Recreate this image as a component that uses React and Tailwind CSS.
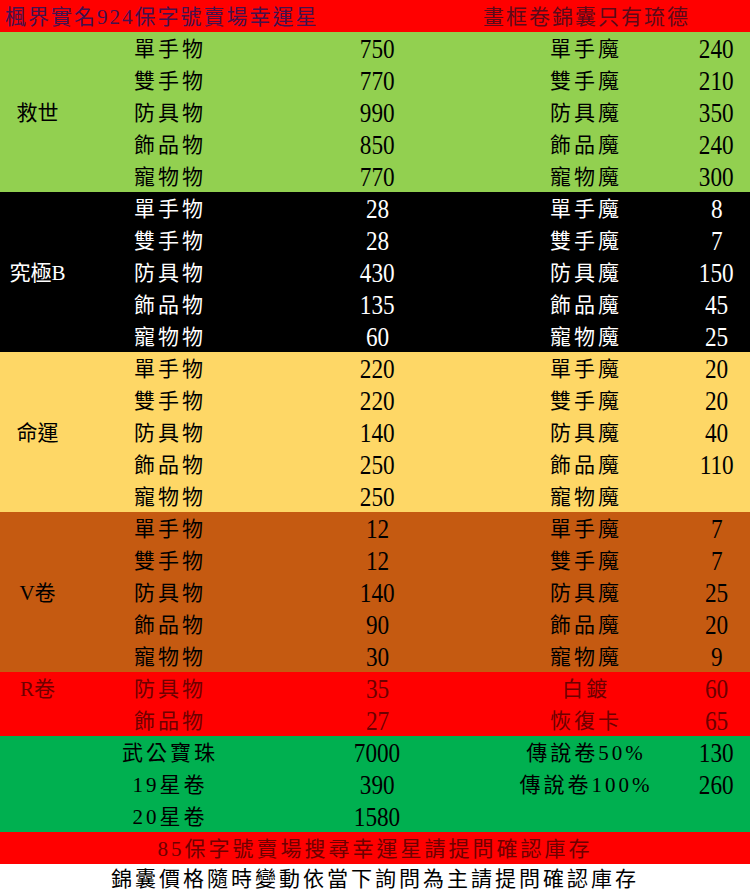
import React from "react"

const cjk = { fontFamily: '"Liberation Serif", "Noto Sans CJK TC", serif' }

const sections = [
    {
        label: '救世',
        bg: 'bg-[#92d050]',
        text: 'text-black',
        rows: [
            ['單手物', '750', '單手魔', '240'],
            ['雙手物', '770', '雙手魔', '210'],
            ['防具物', '990', '防具魔', '350'],
            ['飾品物', '850', '飾品魔', '240'],
            ['寵物物', '770', '寵物魔', '300'],
        ],
    },
    {
        label: '究極B',
        bg: 'bg-black',
        text: 'text-white',
        rows: [
            ['單手物', '28', '單手魔', '8'],
            ['雙手物', '28', '雙手魔', '7'],
            ['防具物', '430', '防具魔', '150'],
            ['飾品物', '135', '飾品魔', '45'],
            ['寵物物', '60', '寵物魔', '25'],
        ],
    },
    {
        label: '命運',
        bg: 'bg-[#fed766]',
        text: 'text-black',
        rows: [
            ['單手物', '220', '單手魔', '20'],
            ['雙手物', '220', '雙手魔', '20'],
            ['防具物', '140', '防具魔', '40'],
            ['飾品物', '250', '飾品魔', '110'],
            ['寵物物', '250', '寵物魔', ''],
        ],
    },
    {
        label: 'V卷',
        bg: 'bg-[#c55a11]',
        text: 'text-black',
        rows: [
            ['單手物', '12', '單手魔', '7'],
            ['雙手物', '12', '雙手魔', '7'],
            ['防具物', '140', '防具魔', '25'],
            ['飾品物', '90', '飾品魔', '20'],
            ['寵物物', '30', '寵物魔', '9'],
        ],
    },
]

function Num({ value }) {
    return <span className="inline-block text-[27px] leading-[30px] scale-x-[0.86]">{value}</span>
}

function Row({ cells }) {
    return (
        <>
            <div className="h-8 flex items-end justify-center pl-5 tracking-[3px] leading-[30px]">{cells[0]}</div>
            <div className="h-8 flex items-end justify-center"><Num value={cells[1]} /></div>
            <div className="h-8 flex items-end justify-center tracking-[3px] leading-[30px]">{cells[2]}</div>
            <div className="h-8 flex items-end justify-center pl-5"><Num value={cells[3]} /></div>
        </>
    )
}

export default function App() {
    return (
        <div className="w-[750px] h-[893px] bg-white text-[21px] overflow-hidden" style={cjk}>
            {/* titulo */}
            <div className="h-8 bg-[#ff0000] flex items-end leading-[30px] tracking-[2px]">
                <span className="pl-[5px] w-[483px] text-[#44124e]">楓界實名924保字號賣場幸運星</span>
                <span className="text-[#5c0a1a]">畫框卷錦囊只有琉德</span>
            </div>

            {sections.map(sec => (
                <div key={sec.label} className={`grid grid-cols-[75px_170px_264px_154px_87px] ${sec.bg} ${sec.text}`}>
                    <div className="row-span-5 flex items-center justify-center pt-1">{sec.label}</div>
                    {sec.rows.map((r, i) => (
                        <Row key={i} cells={r} />
                    ))}
                </div>
            ))}

            {/* R卷 */}
            <div className="grid grid-cols-[75px_170px_264px_154px_87px] bg-[#ff0000] text-[#6e0000]">
                <div className="h-8 flex items-end justify-center leading-[30px]">R卷</div>
                <Row cells={['防具物', '35', '白鍍', '60']} />
                <div></div>
                <Row cells={['飾品物', '27', '恢復卡', '65']} />
            </div>

            {/* otros */}
            <div className="grid grid-cols-[75px_170px_264px_154px_87px] bg-[#00b050] text-black">
                <div></div>
                <Row cells={['武公寶珠', '7000', '傳說卷50%', '130']} />
                <div></div>
                <Row cells={['19星卷', '390', '傳說卷100%', '260']} />
                <div></div>
                <Row cells={['20星卷', '1580', '', '']} />
            </div>

            <div className="h-8 bg-[#ff0000] text-[#6e0000] flex items-end justify-center leading-[30px] tracking-[3px]">
                85保字號賣場搜尋幸運星請提問確認庫存
            </div>
            <div className="h-[29px] flex items-end justify-center leading-[28px] tracking-[3px] text-black">
                錦囊價格隨時變動依當下詢問為主請提問確認庫存
            </div>
        </div>
    )
}
